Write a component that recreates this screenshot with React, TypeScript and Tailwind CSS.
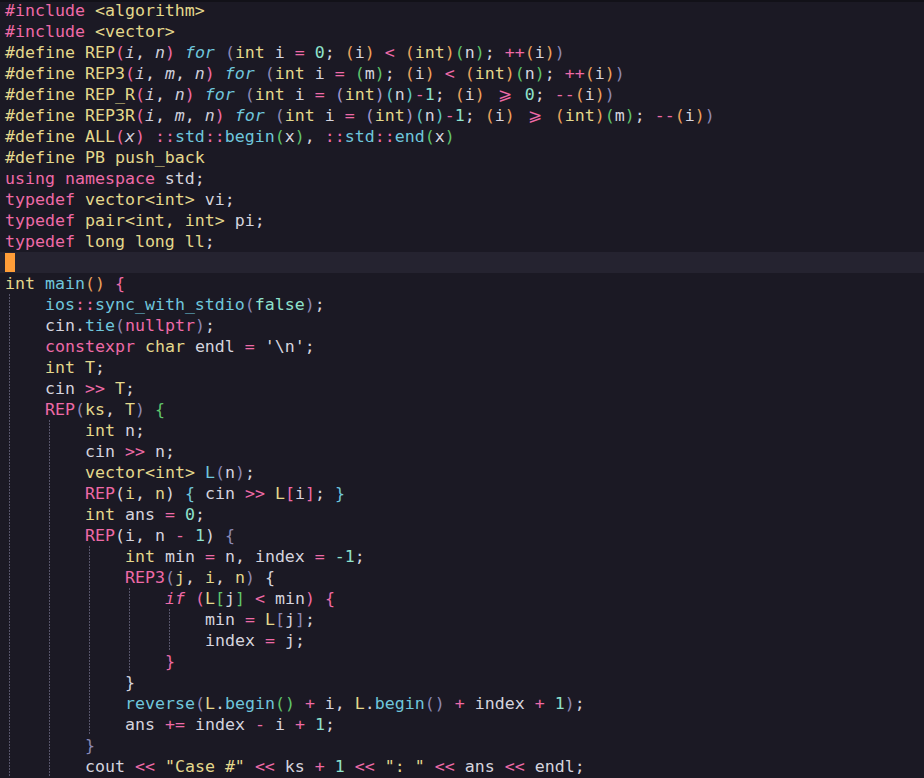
import React from "react";

type Tok = [string, string?];
type Line = { indent: number; toks: Tok[] };

// palette
const W = "text-[#d5d4de]";
const P = "text-[#ee6aa7]";
const Y = "text-[#e4d88c]";
const C = "text-[#6fc6dc]";
const N = "text-[#8fe2cd]";
const O = "text-[#eba25d]";
const G = "text-[#60c56c]";
const V = "text-[#8c89b6]";
const L = "text-[#a197d0]";
const T = "text-[#5cc6c4]";
const IW = "text-[#cfcfdc] italic";
const IC = "text-[#6fc6dc] italic";
const IP = "text-[#ee6aa7] italic";
const GE = "ge";

const lines: Line[] = [
  { indent: 0, toks: [["#include", P], [" "], ["<algorithm>", Y]] },
  { indent: 0, toks: [["#include", P], [" "], ["<vector>", Y]] },
  {
    indent: 0,
    toks: [
      ["#define REP", Y], ["(", P], ["i", IW], [", "], ["n", IW], [")", P], [" "], ["for", IC], [" "],
      ["(", V], ["int", Y], [" i "], ["=", P], [" "], ["0", N], ["; "], ["(", O], ["i"], [")", O], [" "],
      ["<", P], [" "], ["(", O], ["int", Y], [")", O], ["(", G], ["n"], [")", G], ["; "], ["++", P],
      ["(", O], ["i"], [")", O], [")", V],
    ],
  },
  {
    indent: 0,
    toks: [
      ["#define REP3", Y], ["(", P], ["i", IW], [", "], ["m", IW], [", "], ["n", IW], [")", P], [" "], ["for", IC], [" "],
      ["(", V], ["int", Y], [" i "], ["=", P], [" "], ["(", G], ["m"], [")", G], ["; "], ["(", O], ["i"], [")", O], [" "],
      ["<", P], [" "], ["(", O], ["int", Y], [")", O], ["(", G], ["n"], [")", G], ["; "], ["++", P],
      ["(", O], ["i"], [")", O], [")", V],
    ],
  },
  {
    indent: 0,
    toks: [
      ["#define REP_R", Y], ["(", P], ["i", IW], [", "], ["n", IW], [")", P], [" "], ["for", IC], [" "],
      ["(", V], ["int", Y], [" i "], ["=", P], [" "], ["(", L], ["int", Y], [")", L], ["(", T], ["n"], [")", T],
      ["-", P], ["1", N], ["; "], ["(", O], ["i"], [")", O], [" "], [">=", GE], [" "], ["0", N], ["; "],
      ["--", P], ["(", O], ["i"], [")", O], [")", V],
    ],
  },
  {
    indent: 0,
    toks: [
      ["#define REP3R", Y], ["(", P], ["i", IW], [", "], ["m", IW], [", "], ["n", IW], [")", P], [" "], ["for", IC], [" "],
      ["(", V], ["int", Y], [" i "], ["=", P], [" "], ["(", L], ["int", Y], [")", L], ["(", T], ["n"], [")", T],
      ["-", P], ["1", N], ["; "], ["(", O], ["i"], [")", O], [" "], [">=", GE], [" "], ["(", O], ["int", Y], [")", O],
      ["(", G], ["m"], [")", G], ["; "], ["--", P], ["(", O], ["i"], [")", O], [")", V],
    ],
  },
  {
    indent: 0,
    toks: [
      ["#define ALL", Y], ["(", P], ["x", IW], [")", P], [" "], ["::", P], ["std", C], ["::", P], ["begin", C],
      ["(", G], ["x"], [")", G], [", "], ["::", P], ["std", C], ["::", P], ["end", C], ["(", G], ["x"], [")", G],
    ],
  },
  { indent: 0, toks: [["#define PB push_back", Y]] },
  { indent: 0, toks: [["using", P], [" "], ["namespace", P], [" std;"]] },
  { indent: 0, toks: [["typedef", P], [" "], ["vector<int>", Y], [" vi;"]] },
  { indent: 0, toks: [["typedef", P], [" "], ["pair<int, int>", Y], [" pi;"]] },
  { indent: 0, toks: [["typedef", P], [" "], ["long long ll", Y], [";"]] },
  { indent: 0, toks: [] },
  { indent: 0, toks: [["int", Y], [" "], ["main", C], ["()", O], [" "], ["{", P]] },
  { indent: 1, toks: [["ios", C], ["::", P], ["sync_with_stdio", C], ["(", V], ["false", N], [")", V], [";"]] },
  { indent: 1, toks: [["cin."], ["tie", C], ["(", V], ["nullptr", P], [")", V], [";"]] },
  { indent: 1, toks: [["constexpr", P], [" "], ["char", Y], [" endl "], ["=", P], [" '\\n';"]] },
  { indent: 1, toks: [["int", Y], [" "], ["T", Y], [";"]] },
  { indent: 1, toks: [["cin "], [">>", P], [" "], ["T", Y], [";"]] },
  { indent: 1, toks: [["REP", P], ["(", V], ["ks", Y], [", "], ["T", Y], [")", V], [" "], ["{", G]] },
  { indent: 2, toks: [["int", Y], [" n;"]] },
  { indent: 2, toks: [["cin "], [">>", P], [" n;"]] },
  { indent: 2, toks: [["vector<int>", Y], [" "], ["L", C], ["(", V], ["n"], [")", V], [";"]] },
  {
    indent: 2,
    toks: [
      ["REP", P], ["("], ["i", Y], [", "], ["n", Y], [")"], [" "], ["{", C], [" cin "], [">>", P], [" "],
      ["L", Y], ["[", P], ["i"], ["]", P], ["; "], ["}", C],
    ],
  },
  { indent: 2, toks: [["int", Y], [" ans "], ["=", P], [" "], ["0", N], [";"]] },
  { indent: 2, toks: [["REP", P], ["(i, n "], ["-", P], [" "], ["1", N], [")"], [" "], ["{", V]] },
  { indent: 3, toks: [["int", Y], [" min "], ["=", P], [" n, index "], ["=", P], [" "], ["-1", N], [";"]] },
  {
    indent: 3,
    toks: [["REP3", P], ["(", V], ["j", Y], [", "], ["i", Y], [", "], ["n", Y], [")", V], [" {"]],
  },
  {
    indent: 4,
    toks: [
      ["if", IP], [" "], ["(", P], ["L", Y], ["[", G], ["j"], ["]", G], [" "], ["<", P], [" min"], [")", P], [" "], ["{", P],
    ],
  },
  { indent: 5, toks: [["min "], ["=", P], [" "], ["L", Y], ["[", V], ["j"], ["]", V], [";"]] },
  { indent: 5, toks: [["index "], ["=", P], [" j;"]] },
  { indent: 4, toks: [["}", P]] },
  { indent: 3, toks: [["}"]] },
  {
    indent: 3,
    toks: [
      ["reverse", C], ["(", V], ["L", Y], ["."], ["begin", C], ["()", G], [" "], ["+", P], [" i, "], ["L", Y], ["."],
      ["begin", C], ["()", V], [" "], ["+", P], [" index "], ["+", P], [" "], ["1", N], [")", V], [";"],
    ],
  },
  { indent: 3, toks: [["ans "], ["+=", P], [" index "], ["-", P], [" i "], ["+", P], [" "], ["1", N], [";"]] },
  { indent: 2, toks: [["}", V]] },
  {
    indent: 2,
    toks: [
      ["cout "], ["<<", P], [" "], ['"Case #"', Y], [" "], ["<<", P], [" ks "], ["+", P], [" "], ["1", N], [" "],
      ["<<", P], [" "], ['": "', Y], [" "], ["<<", P], [" ans "], ["<<", P], [" endl;"],
    ],
  },
];

function Guide() {
  return (
    <span className="flex h-full w-[40px] shrink-0 pl-[4px]">
      <span className="h-full w-px bg-[repeating-linear-gradient(to_bottom,#56546a_0px,#56546a_2px,transparent_2px,transparent_3px)]" />
    </span>
  );
}

function Token({ tok }: { tok: Tok }) {
  const [text, cls] = tok;
  if (cls === GE) {
    return <span className="inline-block w-[20px] text-center text-[#ee6aa7]">⩾</span>;
  }
  return <span className={cls ?? W}>{text}</span>;
}

export default function App() {
  return (
    <div className="relative h-[778px] w-[924px] overflow-hidden bg-[#1b1924] font-['DejaVu_Sans_Mono',monospace] text-[16.6px] leading-[21px] text-[#d5d4de]">
      <div className="absolute left-0 right-0 top-0 h-[2px] bg-[#121118]" />
      <div className="flex flex-col">
        {lines.map((line, i) => (
          <div
            key={i}
            className={
              i === 12
                ? "flex h-[21px] items-stretch whitespace-pre bg-[#252330] pl-[5px]"
                : "flex h-[21px] items-stretch whitespace-pre pl-[5px]"
            }
          >
            {Array.from({ length: line.indent }).map((_, k) => (
              <Guide key={k} />
            ))}
            {i === 12 && <span className="my-[1px] w-[10px] bg-[#ff9d38]" />}
            <span>
              {line.toks.map((tok, k) => (
                <Token key={k} tok={tok} />
              ))}
            </span>
          </div>
        ))}
      </div>
    </div>
  );
}
